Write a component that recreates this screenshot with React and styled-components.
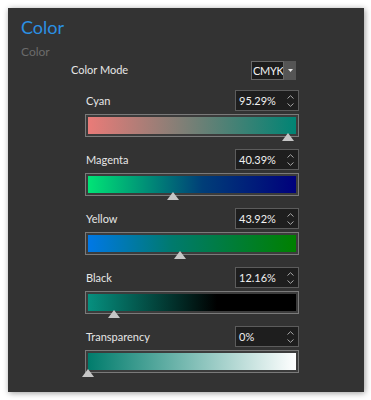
import React from "react";
import styled, { createGlobalStyle } from "styled-components";

const GlobalStyle = createGlobalStyle`
  html, body {
    margin: 0;
    padding: 0;
    background: #ffffff;
  }
  body {
    font-family: "Lato", "Noto Sans", sans-serif;
  }
`;

const channels = [
  { name: "Cyan", value: "95.29%", pos: 0.9529, gradient: "linear-gradient(to right, #ea7b78, #008474)" },
  { name: "Magenta", value: "40.39%", pos: 0.4039, gradient: "linear-gradient(to right, #00e476, #003e78 55%, #00007c)" },
  { name: "Yellow", value: "43.92%", pos: 0.4392, gradient: "linear-gradient(to right, #0078e6, #007a6e 40%, #008000)" },
  { name: "Black", value: "12.16%", pos: 0.1216, gradient: "linear-gradient(to right, #06907f, #000000 62%, #000000)" },
  { name: "Transparency", value: "0%", pos: 0, gradient: "linear-gradient(to right, #007c6c, #ffffff)" },
];

const App = () => {
  return (
    <Page>
      <GlobalStyle />
      <Panel>
        <Title>Color</Title>
        <Subtitle>Color</Subtitle>
        <ModeRow>
          <ModeLabel>Color Mode</ModeLabel>
          <Dropdown>
            <DropValue>CMYK</DropValue>
            <DropButton>
              <svg width="5" height="3" viewBox="0 0 5 3">
                <path d="M0 0 L5 0 L2.5 3 Z" fill="#e6e6e6" />
              </svg>
            </DropButton>
          </Dropdown>
        </ModeRow>
        <Sliders>
          {channels.map((c) => (
            <SliderBlock key={c.name}>
              <Header>
                <Label>{c.name}</Label>
                <NumberBox>
                  <NumberText>{c.value}</NumberText>
                  <Spinner>
                    <svg width="7" height="4" viewBox="0 0 7 4">
                      <path d="M0.5 3.5 L3.5 0.7 L6.5 3.5" fill="none" stroke="#a8a8a8" strokeWidth="1" />
                    </svg>
                    <svg width="7" height="4" viewBox="0 0 7 4">
                      <path d="M0.5 0.5 L3.5 3.3 L6.5 0.5" fill="none" stroke="#a8a8a8" strokeWidth="1" />
                    </svg>
                  </Spinner>
                </NumberBox>
              </Header>
              <Track>
                <Fill style={{ background: c.gradient }} />
                <Thumb style={{ left: `${2 + c.pos * 210}px` }} />
              </Track>
            </SliderBlock>
          ))}
        </Sliders>
      </Panel>
    </Page>
  );
};

export default App;

const Page = styled.div`
  padding: 8px;
  width: 371px;
  height: 400px;
  box-sizing: border-box;
`;

const Panel = styled.div`
  width: 356px;
  height: 384px;
  box-sizing: border-box;
  background: #333333;
  box-shadow: 1px 1px 6px rgba(0, 0, 0, 0.4);
  padding: 6px 0 0 13px;
`;

const Title = styled.div`
  color: #2b90e3;
  font-size: 18px;
  line-height: 26px;
`;

const Subtitle = styled.div`
  color: #6b6b6b;
  font-size: 12px;
  line-height: 18px;
  margin-top: 3px;
`;

const ModeRow = styled.div`
  display: flex;
  justify-content: space-between;
  align-items: flex-start;
  margin-left: 50px;
  width: 225px;
`;

const ModeLabel = styled.div`
  color: #e6e6e6;
  font-size: 11px;
  line-height: 16px;
  padding-top: 1px;
`;

const Dropdown = styled.div`
  display: flex;
  align-items: stretch;
  height: 19px;
`;

const DropValue = styled.div`
  width: 33px;
  box-sizing: border-box;
  border: 1px solid #686868;
  background: #1c1c1c;
  color: #f2f2f2;
  font-size: 11px;
  line-height: 17px;
  padding-left: 1px;
  letter-spacing: -0.3px;
  white-space: nowrap;
  overflow: hidden;
`;

const DropButton = styled.div`
  width: 12px;
  background: #555555;
  display: flex;
  align-items: center;
  justify-content: center;
`;

const Sliders = styled.div`
  margin-left: 64px;
  width: 214px;
  display: flex;
  flex-direction: column;
  gap: 12px;
  margin-top: 10px;
`;

const SliderBlock = styled.div`
  display: flex;
  flex-direction: column;
  gap: 3px;
`;

const Header = styled.div`
  display: flex;
  justify-content: space-between;
  align-items: center;
  height: 21px;
`;

const Label = styled.div`
  color: #e6e6e6;
  font-size: 11px;
  line-height: 16px;
  padding-left: 1px;
`;

const NumberBox = styled.div`
  width: 64px;
  height: 21px;
  box-sizing: border-box;
  border: 1px solid #5c5c5c;
  background: #1e1e1e;
  display: flex;
  align-items: center;
  justify-content: space-between;
  padding: 0 4px 0 3px;
`;

const NumberText = styled.span`
  color: #f0f0f0;
  font-size: 11px;
  line-height: 16px;
`;

const Spinner = styled.div`
  display: flex;
  flex-direction: column;
  gap: 4px;
`;

const Track = styled.div`
  position: relative;
  height: 23px;
  box-sizing: border-box;
  border: 1px solid #7a7a7a;
  padding: 2px;
  background: #3c3c3c;
`;

const Fill = styled.div`
  height: 100%;
`;

const Thumb = styled.div`
  position: absolute;
  bottom: -5px;
  width: 0;
  height: 0;
  margin-left: -6px;
  border-left: 6px solid transparent;
  border-right: 6px solid transparent;
  border-bottom: 8px solid #c6c6c6;
`;
